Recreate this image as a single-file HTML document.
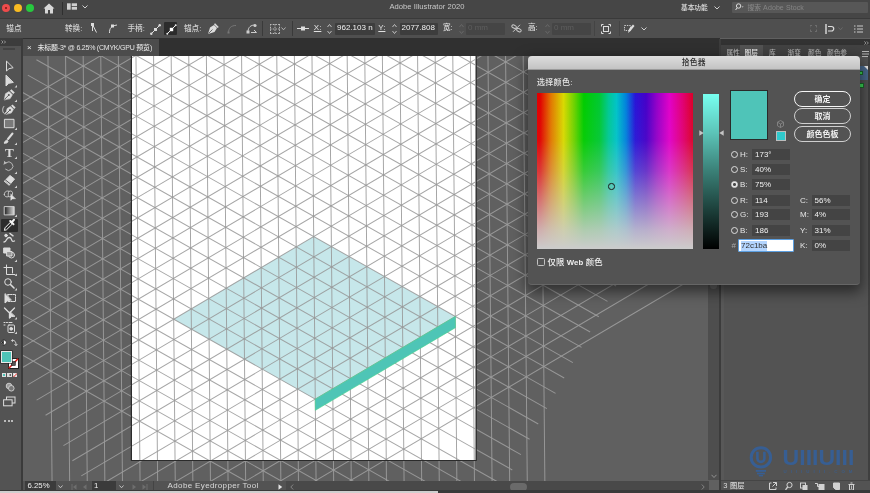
<!DOCTYPE html>
<html><head><meta charset="utf-8"><title>Adobe Illustrator 2020</title>
<style>
*{box-sizing:border-box;margin:0;padding:0}
html,body{width:870px;height:493px;overflow:hidden;background:#606060}
body{font-family:"Liberation Sans","Noto Sans CJK SC",sans-serif;color:#d6d6d6;font-size:8px;line-height:1;font-weight:500}
#app{position:relative;width:870px;height:493px;overflow:hidden;background:#606060}
.abs,#app div,#app span,#app svg{position:absolute}
.cv{left:0;top:0}
.t{white-space:nowrap;line-height:10px;height:10px}
.titlebar,.ctrl,.tabbar,.tools,.status,.rpanel,.dlg{will-change:transform}
/* bars */
.titlebar{left:0;top:0;width:870px;height:18px;background:#464646}
.ctrl{left:0;top:18px;width:870px;height:20px;background:#4f4f4f;border-top:1px solid #3a3a3a}
.tabbar{left:0;top:38px;width:720px;height:18px;background:#303030}
.tab{left:23px;top:1px;width:136px;height:17px;background:#4c4c4c}
.tools{left:0;top:38px;width:21px;height:455px;background:#535353}
.toolgap{left:21px;top:38px;width:2px;height:455px;background:#3a3a3a}
.status{left:23px;top:481px;width:686px;height:10px;background:#535353}
.bottomline{left:0;top:490px;width:870px;height:3px;background:#3a3a3a}
.vscroll{left:708px;top:56px;width:11px;height:424px;background:#4e4e4e}
.rpanel{left:720px;top:39px;width:150px;height:452px;background:#535353}
.fld{background:#3d3d3d;height:11px;border-radius:1px}
.sep{width:1px;background:#3a3a3a}
/* dialog */
.dlg{left:528px;top:56px;width:332px;height:228.500px;background:#535353;border-radius:4px;border-bottom:1px solid #666;box-shadow:0 5px 14px 2px rgba(0,0,0,.5)}
.dlgtitle{left:0;top:0;width:332px;height:13.500px;border-radius:4px 4px 0 0;background:linear-gradient(#dddddd,#c3c3c3);border-bottom:1px solid #9a9a9a}
.btn{left:266px;width:57px;height:16px;border:1px solid #cfcfcf;border-radius:8px;text-align:center;color:#f2f2f2;font-size:8px;line-height:16.500px;font-weight:bold}
.row{left:0;width:332px;height:11px}
.radio{left:203px;top:2px;width:7px;height:7px;border:1px solid #ddd;border-radius:50%}
.lab{left:212px;top:0;font-size:8px;line-height:11px;color:#e6e6e6}
.val{left:224px;top:0;width:38px;height:11px;background:#444;font-size:8px;line-height:11px;color:#f0f0f0;padding-left:3px}
.lab2{left:272px;top:0;font-size:8px;line-height:11px;color:#e6e6e6}
.val2{left:283.5px;top:0;width:38px;height:11px;background:#444;font-size:8px;line-height:11px;color:#f0f0f0;padding-left:3px}
</style></head><body><div id="app">
<svg class="cv" width="870" height="493" viewBox="0 0 870 493">
<defs><clipPath id="ab"><rect x="132" y="56" width="343.5" height="404"/></clipPath></defs>
<g transform="translate(153.66 65.34) rotate(-0.55)" stroke="#9c9c9c" stroke-opacity=".9" stroke-width="1" fill="none">
<path transform="rotate(0 140.80 162.58)" d="M-105.60 -145.42V470.58M-88.00 -145.42V470.58M-70.40 -145.42V470.58M-52.80 -145.42V470.58M-35.20 -145.42V470.58M-17.60 -145.42V470.58M0.00 -145.42V470.58M17.60 -145.42V470.58M35.20 -145.42V470.58M52.80 -145.42V470.58M70.40 -145.42V470.58M88.00 -145.42V470.58M105.60 -145.42V470.58M123.20 -145.42V470.58M140.80 -145.42V470.58M158.40 -145.42V470.58M176.00 -145.42V470.58M193.60 -145.42V470.58M211.20 -145.42V470.58M228.80 -145.42V470.58M246.40 -145.42V470.58M264.00 -145.42V470.58M281.60 -145.42V470.58M299.20 -145.42V470.58M316.80 -145.42V470.58M334.40 -145.42V470.58M352.00 -145.42V470.58M369.60 -145.42V470.58M387.20 -145.42V470.58"/>
<path transform="rotate(60 140.80 162.58)" d="M-105.60 -145.42V474.18M-88.00 -145.42V474.18M-70.40 -145.42V474.18M-52.80 -145.42V474.18M-35.20 -145.42V474.18M-17.60 -145.42V474.18M0.00 -145.42V474.18M17.60 -145.42V474.18M35.20 -145.42V474.18M52.80 -145.42V474.18M70.40 -145.42V474.18M88.00 -145.42V474.18M105.60 -145.42V474.18M123.20 -145.42V474.18M140.80 -145.42V474.18M158.40 -145.42V474.18M176.00 -145.42V474.18M193.60 -145.42V474.18M211.20 -145.42V474.18M228.80 -145.42V474.18M246.40 -145.42V474.18M264.00 -145.42V474.18M281.60 -145.42V474.18M299.20 -145.42V474.18M316.80 -145.42V474.18M334.40 -145.42V474.18M352.00 -145.42V474.18M369.60 -145.42V474.18M387.20 -145.42V474.18"/>
<path transform="rotate(-60 140.80 162.58)" d="M-105.60 -145.42V470.58M-88.00 -145.42V470.58M-70.40 -145.42V470.58M-52.80 -145.42V470.58M-35.20 -145.42V470.58M-17.60 -145.42V470.58M0.00 -145.42V470.58M17.60 -145.42V470.58M35.20 -145.42V470.58M52.80 -145.42V470.58M70.40 -145.42V470.58M88.00 -145.42V470.58M105.60 -145.42V470.58M123.20 -145.42V470.58M140.80 -145.42V470.58M158.40 -145.42V470.58M176.00 -145.42V470.58M193.60 -145.42V470.58M211.20 -145.42V470.58M228.80 -145.42V470.58M246.40 -145.42V470.58M264.00 -145.42V470.58M281.60 -145.42V470.58M299.20 -145.42V470.58M316.80 -145.42V470.58M334.40 -145.42V470.58M352.00 -145.42V470.58M369.60 -145.42V470.58M387.20 -145.42V470.58"/>
</g>
<rect x="130.8" y="54.8" width="346" height="406.2" fill="#2b2b2b"/>
<rect x="132" y="56" width="343.5" height="404" fill="#fff"/>
<g clip-path="url(#ab)">
<g transform="translate(153.66 65.34) rotate(-0.55)">
<polygon points="158.40,172.74 17.60,254.03 158.40,335.33 299.20,254.03" fill="#c6e7ea"/>
<g stroke="#969696" stroke-opacity=".85" stroke-width="1" fill="none">
<path transform="rotate(0 140.80 162.58)" d="M-105.60 -145.42V470.58M-88.00 -145.42V470.58M-70.40 -145.42V470.58M-52.80 -145.42V470.58M-35.20 -145.42V470.58M-17.60 -145.42V470.58M0.00 -145.42V470.58M17.60 -145.42V470.58M35.20 -145.42V470.58M52.80 -145.42V470.58M70.40 -145.42V470.58M88.00 -145.42V470.58M105.60 -145.42V470.58M123.20 -145.42V470.58M140.80 -145.42V470.58M158.40 -145.42V470.58M176.00 -145.42V470.58M193.60 -145.42V470.58M211.20 -145.42V470.58M228.80 -145.42V470.58M246.40 -145.42V470.58M264.00 -145.42V470.58M281.60 -145.42V470.58M299.20 -145.42V470.58M316.80 -145.42V470.58M334.40 -145.42V470.58M352.00 -145.42V470.58M369.60 -145.42V470.58M387.20 -145.42V470.58"/>
<path transform="rotate(60 140.80 162.58)" d="M-105.60 -145.42V474.18M-88.00 -145.42V474.18M-70.40 -145.42V474.18M-52.80 -145.42V474.18M-35.20 -145.42V474.18M-17.60 -145.42V474.18M0.00 -145.42V474.18M17.60 -145.42V474.18M35.20 -145.42V474.18M52.80 -145.42V474.18M70.40 -145.42V474.18M88.00 -145.42V474.18M105.60 -145.42V474.18M123.20 -145.42V474.18M140.80 -145.42V474.18M158.40 -145.42V474.18M176.00 -145.42V474.18M193.60 -145.42V474.18M211.20 -145.42V474.18M228.80 -145.42V474.18M246.40 -145.42V474.18M264.00 -145.42V474.18M281.60 -145.42V474.18M299.20 -145.42V474.18M316.80 -145.42V474.18M334.40 -145.42V474.18M352.00 -145.42V474.18M369.60 -145.42V474.18M387.20 -145.42V474.18"/>
<path transform="rotate(-60 140.80 162.58)" d="M-105.60 -145.42V470.58M-88.00 -145.42V470.58M-70.40 -145.42V470.58M-52.80 -145.42V470.58M-35.20 -145.42V470.58M-17.60 -145.42V470.58M0.00 -145.42V470.58M17.60 -145.42V470.58M35.20 -145.42V470.58M52.80 -145.42V470.58M70.40 -145.42V470.58M88.00 -145.42V470.58M105.60 -145.42V470.58M123.20 -145.42V470.58M140.80 -145.42V470.58M158.40 -145.42V470.58M176.00 -145.42V470.58M193.60 -145.42V470.58M211.20 -145.42V470.58M228.80 -145.42V470.58M246.40 -145.42V470.58M264.00 -145.42V470.58M281.60 -145.42V470.58M299.20 -145.42V470.58M316.80 -145.42V470.58M334.40 -145.42V470.58M352.00 -145.42V470.58M369.60 -145.42V470.58M387.20 -145.42V470.58"/>
</g>
<polygon points="158.40,335.33 299.20,254.03 299.20,265.21 158.40,346.50" fill="#4ec5b6" stroke="#46d38a" stroke-width="0.6"/>
</g>
</g>
</svg>

<!-- title bar -->
<div class="titlebar">
 <div style="left:2.200px;top:4px;width:8px;height:8px;border-radius:50%;background:#ee4b4b"></div>
 <div style="left:4.900px;top:6.700px;width:2.600px;height:2.600px;border-radius:50%;background:#7a1410"></div>
 <div style="left:14.300px;top:4px;width:8px;height:8px;border-radius:50%;background:#f8bb22"></div>
 <div style="left:26.300px;top:4px;width:8px;height:8px;border-radius:50%;background:#27c93f"></div>
 <svg style="left:42.500px;top:2.700px" width="12" height="11" viewBox="0 0 12 11"><path d="M6 0.5 L0.5 5.6 H2 V10.5 H5 V7 H7 V10.5 H10 V5.6 H11.5 Z" fill="#d8d8d8"/></svg>
 <div class="sep" style="left:62px;top:2px;height:13px;background:#2f2f2f"></div>
 <svg style="left:67px;top:3px" width="10" height="8" viewBox="0 0 10 8"><rect x="0" y="0.300" width="3.700" height="6.400" fill="#d0d0d0"/><rect x="4.700" y="0.300" width="5.300" height="2.800" fill="#d0d0d0"/><rect x="4.700" y="3.900" width="5.300" height="2.800" fill="#d0d0d0"/></svg>
 <svg style="left:82px;top:4.5px" width="6" height="4" viewBox="0 0 6 4"><path d="M0.5 0.5 L3 3 L5.5 0.5" stroke="#d0d0d0" stroke-width="1" fill="none"/></svg>
 <span class="t" style="left:389.5px;top:2px;font-size:7.6px;color:#c9c9c9;letter-spacing:.03px">Adobe Illustrator 2020</span>
 <span class="t" style="left:681px;top:2.600px;font-size:6.7px;color:#e0e0e0">基本功能</span>
 <svg style="left:713.5px;top:5.5px" width="6" height="4" viewBox="0 0 6 4"><path d="M0.5 0.5 L3 3 L5.5 0.5" stroke="#d0d0d0" stroke-width="1" fill="none"/></svg>
 <div style="left:731.5px;top:1.5px;width:136px;height:11.5px;background:#575757;border-radius:1px"></div>
 <svg style="left:734.5px;top:3px" width="9" height="8" viewBox="0 0 9 8"><circle cx="3.6" cy="3" r="2.2" stroke="#ddd" stroke-width="1" fill="none"/><path d="M2 5 L0.6 7" stroke="#ddd" stroke-width="1"/><path d="M6.6 3.4 L8.6 3.4 L7.6 4.6Z" fill="#ddd"/></svg>
 <span class="t" style="left:747.5px;top:3.100px;font-size:7px;color:#858585;letter-spacing:.1px"><span style="position:static;font-size:6.7px">搜索</span> Adobe Stock</span>
</div>

<!-- control bar -->
<div class="ctrl">
 <span class="t" style="left:6.3px;top:4.5px;font-size:7.6px;color:#d2d2d2">锚点</span>
 <span class="t" style="left:65px;top:4.5px;font-size:7.6px;color:#d2d2d2">转换:</span>
 <svg style="left:90px;top:4px" width="9" height="11" viewBox="0 0 9 11"><path d="M2.5 1.5 L6.5 9.5 M2.5 1.5 L2.5 8" stroke="#ddd" stroke-width="1" fill="none"/><rect x="1" y="0" width="3" height="3" fill="#ddd"/></svg>
 <svg style="left:108px;top:4px" width="10" height="11" viewBox="0 0 10 11"><path d="M1.5 10 C1.5 5 3 3 9 2" stroke="#ddd" stroke-width="1" fill="none"/><rect x="3" y="1.5" width="3" height="3" fill="#ddd"/></svg>
 <span class="t" style="left:127.5px;top:4.5px;font-size:7.6px;color:#d2d2d2">手柄:</span>
 <svg style="left:150px;top:4.5px" width="11" height="11" viewBox="0 0 11 11"><path d="M1 10 L10 1" stroke="#ddd" stroke-width="1"/><rect x="4" y="4" width="3" height="3" fill="#ddd"/><circle cx="1.3" cy="9.7" r="1.2" fill="#ddd"/><circle cx="9.7" cy="1.3" r="1.2" fill="#ddd"/></svg>
 <div style="left:164.3px;top:2.5px;width:12.7px;height:13.5px;background:#2b2b2b;border-radius:1px"></div>
 <svg style="left:165.5px;top:4.5px" width="11" height="11" viewBox="0 0 11 11"><path d="M1 10 L10 1" stroke="#eee" stroke-width="1"/><rect x="3.8" y="3.8" width="3.4" height="3.4" fill="#fff"/><circle cx="1.3" cy="9.7" r="1" fill="#eee"/><circle cx="9.7" cy="1.3" r="1" fill="#eee"/></svg>
 <span class="t" style="left:184px;top:4.5px;font-size:7.6px;color:#d2d2d2">锚点:</span>
 <svg style="left:207px;top:3.5px" width="12" height="12" viewBox="0 0 12 12"><path d="M1 11 L3 4.5 L7 2 L10 5 L7.5 9 Z" fill="#ddd"/><path d="M7.5 0.8 L11.2 4.5" stroke="#ddd" stroke-width="1.6"/><path d="M1.5 10.5 L5.5 6.5" stroke="#4a4a4a" stroke-width=".8"/></svg>
 <svg style="left:227px;top:4.5px" width="10" height="10" viewBox="0 0 10 10"><path d="M1.5 9 C1.5 4 4 1.5 9 1.5" stroke="#777" stroke-width="1" fill="none"/><rect x="0.5" y="7.5" width="2" height="2" fill="#777"/></svg>
 <svg style="left:246px;top:4px" width="12" height="11" viewBox="0 0 12 11"><path d="M2 9 C2 4 5 2 9 2" stroke="#ccc" stroke-width="1" fill="none"/><rect x="0.5" y="7.5" width="3" height="3" fill="#ccc"/><circle cx="9" cy="2.5" r="1.6" fill="#ccc"/><path d="M5 9.5 L10.5 9.5 M8 7 L10.5 9.5" stroke="#ccc" stroke-width="1" fill="none"/></svg>
 <div class="sep" style="left:262px;top:2px;height:15px"></div>
 <svg style="left:270px;top:4.5px" width="10" height="10" viewBox="0 0 10 10"><path d="M0 .5H10M0 5H10M0 9.5H10M.5 0V10M5 0V10M9.5 0V10" stroke="#bbb" stroke-width="1" stroke-dasharray="1.5 1.2"/></svg>
 <svg style="left:280.5px;top:8px" width="5" height="4" viewBox="0 0 5 4"><path d="M0.5 0.5 L2.5 2.8 L4.5 0.5" stroke="#bbb" stroke-width=".9" fill="none"/></svg>
 <div class="sep" style="left:291.5px;top:2px;height:15px"></div>
 <svg style="left:296.5px;top:7px" width="12" height="5" viewBox="0 0 12 5"><path d="M0 2.5H12" stroke="#ddd" stroke-width="1"/><rect x="4" y="0.5" width="4" height="4" fill="#ddd"/></svg>
 <span class="t" style="left:313.8px;top:4px;font-size:8px;color:#e2e2e2;text-decoration:underline">X:</span>
 <svg style="left:327px;top:3.5px" width="5" height="12" viewBox="0 0 5 12"><path d="M0.5 4 L2.5 1.5 L4.5 4 M0.5 8 L2.5 10.5 L4.5 8" stroke="#ccc" stroke-width=".9" fill="none"/></svg>
 <div class="fld" style="left:335px;top:3.5px;width:39.5px;height:12px"></div>
 <span class="t" style="left:337px;top:4.3px;font-size:8px;color:#f2f2f2">962.103 n</span>
 <span class="t" style="left:378.3px;top:4px;font-size:8px;color:#e2e2e2;text-decoration:underline">Y:</span>
 <svg style="left:391.5px;top:3.5px" width="5" height="12" viewBox="0 0 5 12"><path d="M0.5 4 L2.5 1.5 L4.5 4 M0.5 8 L2.5 10.5 L4.5 8" stroke="#ccc" stroke-width=".9" fill="none"/></svg>
 <div class="fld" style="left:399.5px;top:3.5px;width:38px;height:12px"></div>
 <span class="t" style="left:401.5px;top:4.3px;font-size:8px;color:#f2f2f2">2077.808</span>
 <span class="t" style="left:443px;top:4.3px;font-size:7.6px;color:#e2e2e2">宽:</span>
 <svg style="left:459px;top:3.5px" width="5" height="12" viewBox="0 0 5 12"><path d="M0.5 4 L2.5 1.5 L4.5 4 M0.5 8 L2.5 10.5 L4.5 8" stroke="#6a6a6a" stroke-width=".9" fill="none"/></svg>
 <div class="fld" style="left:466px;top:3.5px;width:39px;height:12px;background:#454545"></div>
 <span class="t" style="left:468px;top:4.3px;font-size:8px;color:#5e5e5e">0 mm</span>
 <svg style="left:510.500px;top:5px" width="11" height="9" viewBox="0 0 11 9"><g stroke="#c8c8c8" stroke-width="1" fill="none"><rect x=".8" y="1.200" width="4.600" height="2.800" rx="1.400" transform="rotate(28 3 2.600)"/><rect x="5.600" y="4.800" width="4.600" height="2.800" rx="1.400" transform="rotate(28 8 6.200)"/><path d="M2 7.800L9 .8"/></g></svg>
 <span class="t" style="left:528px;top:4.3px;font-size:7.6px;color:#e2e2e2">高:</span>
 <svg style="left:544.5px;top:3.5px" width="5" height="12" viewBox="0 0 5 12"><path d="M0.5 4 L2.5 1.5 L4.5 4 M0.5 8 L2.5 10.5 L4.5 8" stroke="#6a6a6a" stroke-width=".9" fill="none"/></svg>
 <div class="fld" style="left:552px;top:3.5px;width:39px;height:12px;background:#454545"></div>
 <span class="t" style="left:554px;top:4.3px;font-size:8px;color:#5e5e5e">0 mm</span>
 <div class="sep" style="left:594px;top:2px;height:15px;background:#444"></div>
 <svg style="left:601px;top:4.5px" width="10" height="10" viewBox="0 0 10 10"><rect x="2.5" y="2.5" width="5" height="5" stroke="#ddd" fill="none"/><path d="M0.5 2.5V.5H2.5M7.5 .5H9.5V2.5M9.5 7.5V9.5H7.5M2.5 9.5H.5V7.5" stroke="#ddd" stroke-width="1" fill="none"/></svg>
 <div class="sep" style="left:619px;top:2px;height:15px;background:#444"></div>
 <svg style="left:624px;top:4px" width="11" height="11" viewBox="0 0 11 11"><rect x="0.5" y="2.5" width="6" height="5" stroke="#ccc" fill="none" stroke-dasharray="1.4 1"/><path d="M4 10 L5 6 L9 1.5 L10.5 3 L6.5 8 Z" fill="#ddd"/></svg>
 <svg style="left:640.5px;top:7.5px" width="6" height="4" viewBox="0 0 6 4"><path d="M0.5 0.5 L3 3 L5.5 0.5" stroke="#d0d0d0" stroke-width="1" fill="none"/></svg>
 <svg style="left:810px;top:6px" width="7" height="7" viewBox="0 0 7 7"><path d="M0 .5H2M0 .5V2.5M5 .5H7M6.5 .5V2.5M0 6.5H2M.5 4.5V6.5M5 6.5H7M6.5 4.5V6.5" stroke="#6d6d6d" stroke-width="1" fill="none"/></svg>
 <svg style="left:824.5px;top:4.5px" width="10" height="10" viewBox="0 0 10 10"><path d="M1 0V10" stroke="#ddd" stroke-width="1.4"/><path d="M3 2.5H6.5A2.2 2.2 0 0 1 6.5 7H3" stroke="#ddd" stroke-width="1.2" fill="none"/></svg>
 <svg style="left:838px;top:7.5px" width="5" height="4" viewBox="0 0 5 4"><path d="M0.5 0.5 L2.5 2.8 L4.5 0.5" stroke="#6d6d6d" stroke-width=".9" fill="none"/></svg>
 <svg style="left:854px;top:5.5px" width="9" height="8" viewBox="0 0 9 8"><path d="M0 1H1.5M3 1H9M0 4H1.5M3 4H9M0 7H1.5M3 7H9" stroke="#ccc" stroke-width="1"/></svg>
</div>

<!-- tab bar -->
<div class="tabbar">
 <div class="tab"></div>
 <span class="t" style="left:27px;top:4.5px;font-size:8px;color:#e8e8e8">×</span>
 <span class="t" style="left:37.4px;top:4.5px;font-size:7px;color:#e6e6e6;letter-spacing:-.22px"><span style="position:static;font-size:6.9px;letter-spacing:-.1px">未标题</span>-3* @ 6.25% (CMYK/GPU <span style="position:static;font-size:6.9px;letter-spacing:-.1px">预览</span>)</span>
</div>

<!-- tools -->
<div class="tools">
 <div style="left:0;top:0;width:21px;height:8px;background:#3c3c3c"></div>
 <svg style="left:1px;top:1.5px" width="6" height="4" viewBox="0 0 6 4"><path d="M0.5 0.5 L2 2 L0.5 3.5 M3 0.5 L4.5 2 L3 3.5" stroke="#bbb" stroke-width=".7" fill="none"/></svg>
 <div style="left:3px;top:10.300px;width:12px;height:1.800px;background:#434343"></div>
 <svg style="left:0;top:18px" width="21" height="400" viewBox="0 0 21 400" id="toolsvg">
 <g fill="none" stroke="#dcdcdc" stroke-width="1" stroke-linejoin="round" stroke-linecap="round">
  <!-- selection (outline) y=66.4 -> local 10.4 -->
  <path d="M6.5 5.5 L6.5 15 L9 12.7 L12.8 11.8 Z"/>
  <!-- direct selection (filled) y=80.5 -> 24.5 -->
  <path d="M6 19.5 L6 30 L8.8 27.3 L13 26.5 Z" fill="#dcdcdc"/>
  <!-- pen y=95 -> 39 -->
  <path d="M4.300 43.600 L5.500 37.700 L9.100 35.500 L12.400 38.800 L10.200 42.400 Z" fill="#dcdcdc" stroke-width=".6"/><path d="M4.600 43.300 L8.300 39.600" stroke="#535353" stroke-width=".9"/><circle cx="8.800" cy="39.100" r="1" fill="#535353" stroke="none"/><path d="M10.700 33.900 L14 37.200" stroke-width="2.100" stroke-linecap="butt"/>
  <!-- curvature y=109 -> 53 -->
  <path d="M6 58 L7.100 52.600 L10.400 50.500 L13.400 53.500 L11.400 56.800 Z" fill="#dcdcdc" stroke-width=".6"/><path d="M6.300 57.700 L9.600 54.400" stroke="#535353" stroke-width=".9"/><circle cx="10" cy="54" r=".9" fill="#535353" stroke="none"/><path d="M11.800 49.100 L14.900 52.200" stroke-width="2" stroke-linecap="butt"/><path d="M3.800 50.500 C1.800 53 2.600 56.500 4.300 57.600 C5.200 58.100 6 57.400 5.600 56.500" stroke-width=".9"/>
  <!-- rectangle y=123.6 -> 67.6 -->
  <rect x="4.800" y="63.300" width="9.200" height="8.400" fill="#7a7a7a"/>
  <!-- brush y=138 -> 82 -->
  <path d="M12.5 77.5 L8 83" stroke-width="2"/><path d="M4.5 87 C5 84 7 83.5 8 85 C8 87 6 87.5 4.5 87Z" fill="#dcdcdc"/>
  <!-- T y=152 -> 96 -->
  <text x="9.400" y="101.300" text-anchor="middle" font-family="Liberation Serif, serif" font-weight="bold" font-size="13.200" fill="#dcdcdc" stroke="none">T</text>
  <!-- rotate y=166 -> 110 -->
  <path d="M6 106.700 A4.300 4.300 0 1 1 5.600 113.300" stroke="#c2c2c2" stroke-width=".9"/><path d="M4.200 105.200 L6.300 107.100 L3.800 108.200" fill="#c2c2c2" stroke="#c2c2c2" stroke-width=".6"/>
  <!-- eraser y=180.6 -> 124.6 -->
  <path d="M4.5 125 L10 119.5 L14.5 123 L9.5 129 Z" fill="#dcdcdc"/><path d="M5.5 124 L10.5 128" stroke="#535353"/>
  <!-- shape builder y=195 -> 139 -->
  <path d="M4.300 138.500 C4.300 135.500 7 134.500 9 135.300 C11.500 134.300 13 136 12.500 138 C12.500 140.500 10 141.200 8.500 140.600 C6.500 141.500 4.300 140.500 4.300 138.500Z M8.800 135.500 C8 137.500 8 139 8.600 140.500" stroke-width=".9" stroke="#cfcfcf"/><path d="M10.800 138.200 L10.800 144.300 L12.400 142.900 L15.300 142.700 Z" fill="#e2e2e2" stroke-width=".5"/>
  <!-- gradient y=210 -> 154 -->
  <rect x="4.600" y="150.600" width="9.600" height="8.300" fill="url(#gr)" stroke="#d8d8d8" stroke-width=".9"/>
 </g>
 <defs><linearGradient id="gr" x1="0" x2="1"><stop offset="0" stop-color="#262626"/><stop offset="1" stop-color="#dadada"/></linearGradient></defs>
 <!-- corner arrows -->
 <g fill="#cfcfcf"><path d="M17 31.5V29L14.5 31.5Z M17 46V43.5L14.5 46Z M17 74V71.500L14.500 74Z M17 89V86.500L14.500 89Z M17 103V100.500L14.500 103Z M17 118V115.500L14.500 118Z M17 132V129.500L14.500 132Z M17 161V158.500L14.500 161Z"/></g>
 </svg>
 <!-- eyedropper selected y=224.4 -->
 <div style="left:1px;top:180.5px;width:16.800px;height:13.500px;background:#2c2c2c;border-radius:1px"></div>
 <svg style="left:0;top:178px" width="21" height="160" viewBox="0 0 21 160">
 <g fill="none" stroke="#dcdcdc" stroke-width="1" stroke-linejoin="round" stroke-linecap="round">
  <path d="M4.5 14 L5 11.8 L10.5 6.2 L12.3 8 L6.8 13.5 Z" stroke="#f2f2f2"/><path d="M10.2 5 L13.5 8.3 M11.5 6.5 L14 3.8" stroke-width="2" stroke="#f2f2f2"/>
  <!-- blend y=238.7 -> 22.7 -->
  <path d="M4 26 C7 26 6 21 9.5 21.5 C13 22 10 26.5 14.500 25" stroke-width="1.3"/><circle cx="6" cy="19.500" r="1.3" fill="#dcdcdc"/><path d="M10 17.500 L13 19.800" stroke-width="1.500"/>
  <!-- live paint y=253 -> 37 -->
  <rect x="4" y="32" width="6" height="5" fill="#dcdcdc"/><circle cx="11.500" cy="39" r="3"/><rect x="7" y="35.500" width="5" height="4.500" fill="#999"/>
  <!-- artboard y=269.7 -> 53.7 -->
  <path d="M6.500 49 V58.500 H15 M4 51.500 H12.500 V57"/>
  <!-- zoom y=283.5 -> 67.5 -->
  <circle cx="8" cy="66" r="3.300"/><path d="M10.500 68.500 L14 72" stroke-width="1.600"/>
  <!-- free transform y=298 -> 82 -->
  <path d="M5 78 L5 87 L7.500 84.800 L11 84 Z" fill="#dcdcdc"/><rect x="8" y="78.500" width="7.500" height="7" stroke-dasharray="1.500 1"/>
  <!-- perspective y=312.7 -> 96.7 -->
  <path d="M4.500 92 L9.500 97 L14.500 92 M9.500 97 V102" stroke-width="1.300"/><path d="M10 96 L10 102 L11.600 100.500 L14.500 100.300 Z" fill="#dcdcdc"/>
  <!-- symbol sprayer y=327.5 -> 111.5 -->
  <rect x="8" y="109" width="6.500" height="7.500" rx="1"/><circle cx="11.200" cy="112.800" r="1.400" fill="#dcdcdc"/><path d="M4 106.500 H5 M6.500 106.500 H7.500 M4 109 H5 M9 106.500 H12"/>
 </g>
 <g fill="#cfcfcf"><path d="M17 74.500V72L14.500 74.500Z M17 103.500V101L14.500 103.500Z M17 118V115.500L14.500 118Z M17 46V43.500L14.500 46Z M17 60V57.500L14.500 60Z"/></g>
 </svg>
 <!-- small swap -->
 <svg style="left:0;top:299px" width="21" height="12" viewBox="0 0 21 12"><circle cx="3.800" cy="5.500" r="2.600" fill="#fff" stroke="#222" stroke-width=".8"/><path d="M3.800 3 A2.600 2.600 0 0 0 3.800 8Z" fill="#222"/><path d="M12 3.500 C15 3 16 5 16 8 M14.500 7 L16 8.800 L17.300 7 M12.800 2.300 L11.500 3.600 L13 4.600" stroke="#ddd" stroke-width=".9" fill="none"/></svg>
 <!-- fill/stroke -->
 <div style="left:8.4px;top:319.500px;width:10.500px;height:11px;background:#fff;border:1px solid #222"></div>
 <svg style="left:8.4px;top:319.500px" width="10.500" height="11" viewBox="0 0 10.500 11"><path d="M10 .8 L.8 10.200" stroke="#e0201a" stroke-width="1.600"/><rect x="3.300" y="3.500" width="4" height="4" fill="#535353" stroke="#222" stroke-width=".6"/></svg>
 <div style="left:1px;top:313px;width:10.500px;height:11.500px;background:#4ec4b8;border:1px solid #e8e8e8;box-shadow:0 0 0 .6px #222"></div>
 <!-- color mode row y=374.8 -->
 <div style="left:1.500px;top:334.500px;width:4.500px;height:4.500px;background:#4ec4b8;border:.5px solid #ddd"></div>
 <div style="left:7px;top:334.500px;width:4.500px;height:4.500px;background:linear-gradient(90deg,#fff,#444);border:.5px solid #ddd"></div>
 <div style="left:12.500px;top:334.500px;width:4.500px;height:4.500px;background:#fff;border:.5px solid #ddd"></div>
 <svg style="left:12.500px;top:334.500px" width="4.500" height="4.500" viewBox="0 0 4.500 4.500"><path d="M4.200 .3L.3 4.200" stroke="#e0201a" stroke-width="1"/></svg>
 <!-- draw mode y=386.7 -->
 <svg style="left:5px;top:344px" width="10" height="10" viewBox="0 0 10 10"><circle cx="4" cy="4" r="2.800" fill="#999" stroke="#ddd" stroke-width=".8"/><circle cx="6.300" cy="6.300" r="2.800" fill="#777" stroke="#ddd" stroke-width=".8"/></svg>
 <!-- screen mode y=401.5 -->
 <svg style="left:3px;top:358px" width="13" height="11" viewBox="0 0 13 11"><rect x="3.500" y="1" width="8.500" height="6" fill="#535353" stroke="#ddd" stroke-width="1"/><rect x=".6" y="3.800" width="8.500" height="6" fill="#535353" stroke="#ddd" stroke-width="1"/></svg>
 <!-- dots y=421 -->
 <div style="left:4px;top:382.300px;width:2px;height:2px;background:#ddd;border-radius:50%"></div>
 <div style="left:7.600px;top:382.300px;width:2px;height:2px;background:#ddd;border-radius:50%"></div>
 <div style="left:11.200px;top:382.300px;width:2px;height:2px;background:#ddd;border-radius:50%"></div>
</div>
<div class="toolgap"></div>

<!-- status bar -->
<div class="status">
 <div style="left:2px;top:0;width:30.500px;height:10px;background:#3b3b3b"></div>
 <span class="t" style="left:4.500px;top:0.300px;font-size:7.800px;color:#f0f0f0">6.25%</span>
 <svg style="left:34.500px;top:3.500px" width="5" height="4" viewBox="0 0 5 4"><path d="M0.500 0.500 L2.500 2.800 L4.500 0.500" stroke="#ccc" stroke-width=".9" fill="none"/></svg>
 <svg style="left:47.500px;top:2.500px" width="6" height="6" viewBox="0 0 6 6"><path d="M1 0V6" stroke="#6e6e6e" stroke-width="1"/><path d="M5.500 .3L2 3L5.500 5.700Z" fill="#6e6e6e"/></svg>
 <svg style="left:58.500px;top:2.500px" width="5" height="6" viewBox="0 0 5 6"><path d="M4.500 .3L1 3L4.500 5.700Z" fill="#6e6e6e"/></svg>
 <div style="left:69px;top:0;width:24px;height:10px;background:#3b3b3b"></div>
 <span class="t" style="left:71px;top:0.300px;font-size:7.800px;color:#f0f0f0">1</span>
 <svg style="left:95.500px;top:3.500px" width="5" height="4" viewBox="0 0 5 4"><path d="M0.500 0.500 L2.500 2.800 L4.500 0.500" stroke="#ccc" stroke-width=".9" fill="none"/></svg>
 <svg style="left:109px;top:2.500px" width="5" height="6" viewBox="0 0 5 6"><path d="M.5 .3L4 3L.5 5.700Z" fill="#6e6e6e"/></svg>
 <svg style="left:118.500px;top:2.500px" width="6" height="6" viewBox="0 0 6 6"><path d="M5 0V6" stroke="#6e6e6e" stroke-width="1"/><path d="M.5 .3L4 3L.5 5.700Z" fill="#6e6e6e"/></svg>
 <div class="sep" style="left:130px;top:0;height:10px;background:#444"></div>
 <span class="t" style="left:144.600px;top:0.300px;font-size:8px;color:#dadada;letter-spacing:.36px">Adobe Eyedropper Tool</span>
 <svg style="left:255px;top:2.500px" width="5" height="6" viewBox="0 0 5 6"><path d="M.5 .3L4.200 3L.5 5.700Z" fill="#e6e6e6"/></svg>
 <div style="left:263px;top:0;width:423px;height:10px;background:#494949"></div>
 <svg style="left:266.500px;top:2.500px" width="4" height="6" viewBox="0 0 4 6"><path d="M3.200 .5L.8 3L3.200 5.500" stroke="#8a8a8a" stroke-width=".9" fill="none"/></svg>
 <div style="left:487px;top:1.500px;width:16.500px;height:8px;border-radius:4px;background:#6a6a6a"></div>
 <svg style="left:678px;top:2.500px" width="4" height="6" viewBox="0 0 4 6"><path d="M.8 .5L3.200 3L.8 5.500" stroke="#8a8a8a" stroke-width=".9" fill="none"/></svg>
</div>

<!-- vscroll -->
<div class="vscroll">
 <div style="left:2px;top:150px;width:7px;height:83px;border-radius:3.500px;background:#626262"></div>
 <svg style="left:3px;top:417.500px" width="6" height="5" viewBox="0 0 6 5"><path d="M.5 .8L3 3.500L5.500 .8" stroke="#9a9a9a" stroke-width=".9" fill="none"/></svg>
</div>

<!-- right panel -->
<div class="rpanel">
 <div style="left:0;top:0;width:150px;height:6px;background:#323232"></div>
 <svg style="left:143.500px;top:1.500px" width="5" height="4" viewBox="0 0 5 4"><path d="M.4 .4L1.900 2L.4 3.600M2.800 .4L4.300 2L2.800 3.600" stroke="#bbb" stroke-width=".7" fill="none"/></svg>
 <div style="left:0;top:6px;width:150px;height:11px;background:#424242"></div>
 <div style="left:20px;top:6px;width:22.500px;height:11px;background:#535353"></div>
 <span class="t" style="left:6.500px;top:9.300px;font-size:6.700px;color:#b5b5b5">属性</span>
 <span class="t" style="left:24.500px;top:9.300px;font-size:6.700px;color:#f2f2f2">图层</span>
 <span class="t" style="left:49px;top:9.300px;font-size:6.700px;color:#b5b5b5">库</span>
 <span class="t" style="left:67.500px;top:9.300px;font-size:6.700px;color:#b5b5b5">渐变</span>
 <span class="t" style="left:88px;top:9.300px;font-size:6.700px;color:#b5b5b5">颜色</span>
 <span class="t" style="left:107px;top:9.300px;font-size:6.700px;color:#b5b5b5">颜色参</span>
 <svg style="left:141.500px;top:11.500px" width="7" height="6" viewBox="0 0 7 6"><path d="M0 .5H7M0 3H7M0 5.500H7" stroke="#c4c4c4" stroke-width=".9"/></svg>
 <div style="left:0;top:26.800px;width:150px;height:14.300px;background:#4a6a8e"></div>
 <div style="left:138.800px;top:31.600px;width:4.600px;height:4.600px;background:#3ddc58;border:.5px solid #1a6a2a"></div>
 <div style="left:138.800px;top:44.200px;width:5.400px;height:5.200px;background:#3ddc58;border:.5px solid #1a6a2a"></div>
 <svg style="left:144.300px;top:27.300px" width="4" height="4" viewBox="0 0 4 4"><path d="M0 0H4V4Z" fill="#e8e8e8"/></svg>
 <div style="left:147.500px;top:17px;width:2.500px;height:424px;background:#3f3f3f"></div>
 <div style="left:0;top:441px;width:150px;height:1px;background:#454545"></div>
 <span class="t" style="left:3.300px;top:442.300px;font-size:7.500px;color:#dcdcdc;letter-spacing:.2px">3 <span style="position:static;font-size:7.200px">图层</span></span>
 <svg style="left:48px;top:441.500px" width="90" height="10" viewBox="0 0 90 10">
  <g stroke="#d2d2d2" stroke-width="1" fill="none">
   <path d="M3.500 2H1.500V8.500H8V6.500M5 1.500H8.500V5M8.500 1.500L4.500 5.500"/>
   <circle cx="21.500" cy="4" r="2.600"/><path d="M19.700 6L17.500 8.800" stroke-width="1.300"/>
   <rect x="32.500" y="2" width="5" height="5"/><rect x="35" y="4.500" width="4" height="4" fill="#d2d2d2"/>
   <path d="M47 2.500H49.500V5.500H51"/><rect x="51" y="3.500" width="5" height="5" fill="#d2d2d2"/>
   <path d="M65.500 2H71.500V8.500H67.500L65.500 6.500Z" fill="#d2d2d2"/>
   <path d="M80.500 3.500H86.500M81.500 3.500V9H85.500V3.500M82.500 2H84.500" /><path d="M83.500 4.500V8" stroke-width=".8"/>
  </g>
 </svg>
 <!-- watermark -->
 <svg style="left:28px;top:403px" width="112" height="38" viewBox="0 0 112 38">
  <g fill="none" stroke="#34609a" stroke-width="3" opacity=".9">
   <circle cx="12.900" cy="15.400" r="9.700"/>
   <path d="M9.400 9.800V16.400A3.500 3.500 0 0 0 16.400 16.400V9.800" stroke-width="2.600"/>
  </g>
  <g fill="#34609a" opacity=".9">
   <rect x="7.800" y="27.900" width="10.200" height="1.900"/><rect x="9" y="30.700" width="7.800" height="1.700"/><rect x="10.800" y="33" width="4.200" height="1.400"/>
  </g>
  <text x="34.600" y="22.900" font-family="Liberation Sans, sans-serif" font-weight="bold" font-size="21.500" fill="#34609a" opacity=".9" textLength="71.700" lengthAdjust="spacingAndGlyphs">UIIIUIII</text>
  <text x="35.500" y="30.600" font-family="Liberation Sans, sans-serif" font-weight="bold" font-size="4.400" fill="#34609a" opacity=".7" textLength="69" lengthAdjust="spacing">UIIIUIII.COM</text>
 </svg>
</div>
<div style="left:718.500px;top:39px;width:2px;height:452px;background:#3c3c3c"></div>
<div style="left:720.500px;top:56px;width:3px;height:424px;background:#585858"></div>
<div class="bottomline"><div style="left:0;top:1px;width:438px;height:2px;background:#cfcfcf"></div></div>

<!-- dialog -->
<div class="dlg">
 <div class="dlgtitle"></div>
 <span class="t" style="left:153.800px;top:2.300px;font-size:7.800px;color:#2e2e2e;letter-spacing:.2px">拾色器</span>
 <span class="t" style="left:9px;top:22.300px;font-size:8px;color:#e6e6e6;letter-spacing:.3px">选择颜色:</span>
 <!-- color field -->
 <div style="left:9px;top:37.300px;width:155.500px;height:155.500px;background:linear-gradient(90deg,#e10000 0%,#e10000 2%,#e27800 9%,#d9d900 17%,#6ad200 24%,#00cc00 30%,#00c832 40%,#00c896 46%,#00c3c8 51%,#0082dc 57%,#2814d7 63%,#4600c8 70%,#9600c8 77%,#e100c8 85%,#e10078 93%,#dc0028 100%)"></div>
 <div style="left:9px;top:37.300px;width:155.500px;height:155.500px;background:linear-gradient(180deg,rgba(204,204,204,0) 0%,rgba(204,204,204,.04) 30%,rgba(204,204,204,.27) 50%,rgba(204,204,204,.58) 70%,rgba(204,204,204,.86) 88%,rgba(204,204,204,1) 100%)"></div>
 <div style="left:80px;top:127.300px;width:6.500px;height:6.500px;border:1px solid #1a1a1a;border-radius:50%"></div>
 <!-- slider -->
 <div style="left:175.400px;top:37.800px;width:15.300px;height:155px;background:linear-gradient(180deg,#78fff0 0%,#5cc4b8 25%,#3a7f76 50%,#1c3f3a 75%,#000 100%)"></div>
 <svg style="left:170.500px;top:73.500px" width="5" height="6" viewBox="0 0 5 6"><path d="M.3 .3L4.700 3L.3 5.700Z" fill="#c4c4c4"/></svg>
 <svg style="left:191px;top:73.500px" width="5" height="6" viewBox="0 0 5 6"><path d="M4.700 .3L.3 3L4.700 5.700Z" fill="#c4c4c4"/></svg>
 <!-- preview -->
 <div style="left:202px;top:34px;width:38px;height:49.500px;background:#4fc4b8;border:1px solid #2a2a2a"></div>
 <svg style="left:249px;top:63.500px" width="7" height="8" viewBox="0 0 7 8"><path d="M3.500 .5L6.500 2.200V5.800L3.500 7.500L.5 5.800V2.200Z M.5 2.200L3.500 4L6.500 2.200M3.500 4V7.500" stroke="#8d8d8d" stroke-width=".8" fill="none"/></svg>
 <div style="left:248.400px;top:75px;width:9.600px;height:9.600px;background:#2fc9cc;border:1px solid #bdbdbd"></div>
 <!-- buttons -->
 <div class="btn" style="top:34.500px;border:1.700px solid #f6f6f6;line-height:15.200px">确定</div>
 <div class="btn" style="top:52.300px">取消</div>
 <div class="btn" style="top:70px">颜色色板</div>
 <!-- rows -->
 <div class="row" style="top:93px"><div class="radio"></div><span class="lab">H:</span><div class="val">173°</div></div>
 <div class="row" style="top:108.200px"><div class="radio"></div><span class="lab">S:</span><div class="val">40%</div></div>
 <div class="row" style="top:123.400px"><div class="radio" style="background:radial-gradient(circle,#4a4a4a 0 1.300px,#e8e8e8 1.600px)"></div><span class="lab">B:</span><div class="val">75%</div></div>
 <div class="row" style="top:138.600px"><div class="radio"></div><span class="lab">R:</span><div class="val">114</div><span class="lab2">C:</span><div class="val2">56%</div></div>
 <div class="row" style="top:153.400px"><div class="radio"></div><span class="lab">G:</span><div class="val">193</div><span class="lab2">M:</span><div class="val2">4%</div></div>
 <div class="row" style="top:168.600px"><div class="radio"></div><span class="lab">B:</span><div class="val">186</div><span class="lab2">Y:</span><div class="val2">31%</div></div>
 <div class="row" style="top:184px"><span class="lab" style="left:203.500px;color:#a8a8a8">#</span>
  <div style="left:210px;top:-1px;width:55.500px;height:12.500px;background:#fff;border:1px solid #5c9fe0;border-radius:1px"></div>
  <span class="t" style="left:213px;top:.5px;font-size:8px;color:#303030;background:#b4d5fe;height:10px;line-height:10px">72c1ba</span>
  <span class="lab2">K:</span><div class="val2">0%</div></div>
 <!-- checkbox -->
 <div style="left:9.300px;top:202.200px;width:7.400px;height:7.400px;border:.8px solid #c2c2c2;border-radius:1.500px"></div>
 <span class="t" style="left:19.500px;top:201.300px;font-size:8.300px;color:#f0f0f0;letter-spacing:.1px;font-weight:500">仅限 <b style="font-weight:bold;font-size:7.800px">Web</b> 颜色</span>
</div>

</div></body></html>
